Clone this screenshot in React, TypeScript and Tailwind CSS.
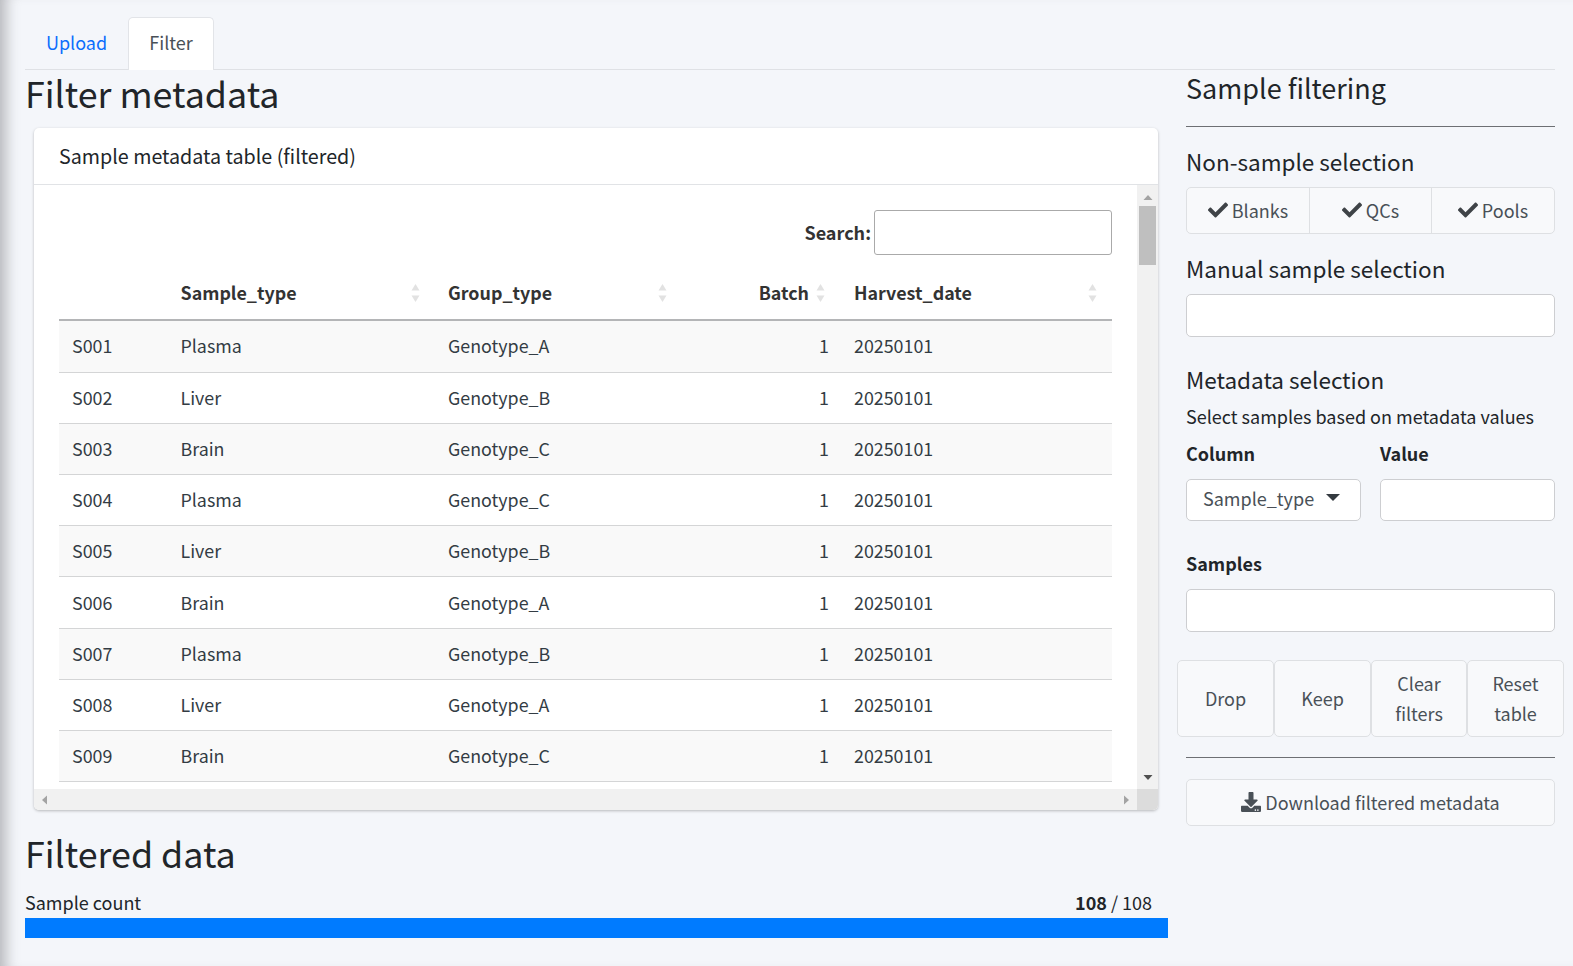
import { FaCheck, FaDownload } from "react-icons/fa";

const rows = [
  ["S001", "Plasma", "Genotype_A"],
  ["S002", "Liver", "Genotype_B"],
  ["S003", "Brain", "Genotype_C"],
  ["S004", "Plasma", "Genotype_C"],
  ["S005", "Liver", "Genotype_B"],
  ["S006", "Brain", "Genotype_A"],
  ["S007", "Plasma", "Genotype_B"],
  ["S008", "Liver", "Genotype_A"],
  ["S009", "Brain", "Genotype_C"],
];

function SortIcon() {
  return (
    <svg width="9" height="18" viewBox="0 0 9 18" className="text-[#e2e2e2]" fill="currentColor">
      <path d="M4.5 0L8.5 6.5H0.5Z" />
      <path d="M4.5 18L8.5 11.5H0.5Z" />
    </svg>
  );
}

function Arrow({ dir, color }: { dir: "up" | "down" | "left" | "right"; color: string }) {
  const d = {
    up: "M5 4L9.5 9H0.5Z",
    down: "M5 6L9.5 1H0.5Z",
    left: "M2 5L7 0.5V9.5Z",
    right: "M8 5L3 0.5V9.5Z",
  }[dir];
  return (
    <svg width="10" height="10" viewBox="0 0 10 10" fill={color}>
      <path d={d} />
    </svg>
  );
}

function TextInput({ className }: { className: string }) {
  return <div className={`bg-white border border-[#cdced1] rounded-[5px] ${className}`} />;
}

function SampleTable() {
  return (
    <table className="w-[1053px] table-fixed border-collapse text-[17.85px] text-[#333c44]">
      <colgroup>
        <col className="w-[109px]" />
        <col className="w-[267px]" />
        <col className="w-[240px]" />
        <col className="w-[166px]" />
        <col className="w-[271px]" />
      </colgroup>
      <thead>
        <tr className="h-[65px] border-b-2 border-[#b4b5b7] font-bold text-[#333]">
          <th />
          <th className="text-left pl-[12.5px] pr-[15px]">
            <div className="flex items-center justify-between pt-[11px]">
              <span>Sample_type</span>
              <SortIcon />
            </div>
          </th>
          <th className="text-left pl-[13px] pr-[8px]">
            <div className="flex items-center justify-between pt-[11px]">
              <span>Group_type</span>
              <SortIcon />
            </div>
          </th>
          <th className="pr-[16px]">
            <div className="flex items-center justify-end gap-[7px] pt-[11px]">
              <span>Batch</span>
              <SortIcon />
            </div>
          </th>
          <th className="text-left pl-[13px] pr-[15px]">
            <div className="flex items-center justify-between pt-[11px]">
              <span>Harvest_date</span>
              <SortIcon />
            </div>
          </th>
        </tr>
      </thead>
      <tbody>
        {rows.map((row, i) => {
          // first row text sits a little higher in the table
          const lift = i === 0 ? "pb-[2px]" : "";
          return (
            <tr
              key={row[0]}
              className={`border-b border-[#d4d5d6] ${i === 0 || i === 5 ? "h-[52px]" : "h-[51px]"} ${i % 2 === 0 ? "bg-[#f9f9f9]" : "bg-white"}`}
            >
              <td className={`pl-[13px] ${lift}`}>{row[0]}</td>
              <td className={`pl-[12.5px] ${lift}`}>{row[1]}</td>
              <td className={`pl-[13px] ${lift}`}>{row[2]}</td>
              <td className={`pr-[12px] text-right ${lift}`}>1</td>
              <td className={`pl-[13px] ${lift}`}>20250101</td>
            </tr>
          );
        })}
      </tbody>
    </table>
  );
}

function ToggleButton({ label, className }: { label: string; className: string }) {
  return (
    <div className={`flex items-center justify-center gap-[4px] text-[#495057] ${className}`}>
      <FaCheck className="text-[20px] text-[#3f4347] -mt-[1px]" />
      <span>{label}</span>
    </div>
  );
}

function ActionButton({ children, className }: { children: React.ReactNode; className: string }) {
  return (
    <div className={`flex items-center justify-center text-center leading-[30px] pb-[2px] bg-[#f8f9fb] border border-[#dee0e3] rounded-[5px] text-[#495057] ${className}`}>
      {children}
    </div>
  );
}

function App() {
  return (
    <div className="h-[966px] overflow-hidden bg-[#f4f6fa] pl-[25px] pr-[18px] pt-[17px] shadow-[inset_16px_0_14px_-10px_rgba(90,90,95,0.4)] font-['Noto_Sans_CJK_SC','Liberation_Sans',sans-serif] text-[18px] leading-[27px] text-[#212529]">
      {/* tabs */}
      <div className="flex h-[53px] border-b border-[#dfe1e5]">
        <div className="w-[103px] h-[52px] pb-[1px] flex items-center justify-center text-[#0d6efd]">Upload</div>
        <div className="w-[86px] h-[53px] pb-[3px] flex items-center justify-center bg-white border border-b-0 border-[#e2e4e8] rounded-t-[5px] text-[#495057]">
          Filter
        </div>
      </div>

      <div className="flex">
        {/* left column */}
        <div className="w-[1143px] shrink-0">
          <h1 className="h-[50px] text-[35.8px] leading-[44px]">Filter metadata</h1>
          <div className="mt-[8px] ml-[9px] w-[1124px] h-[682px] bg-white rounded-[5px] shadow-[0_1px_3px_rgba(0,0,0,0.25)] overflow-hidden flex flex-col">
            <div className="h-[57px] shrink-0 flex items-center pl-[25px] pb-[2px] border-b border-[#e1e3e6] text-[19.7px]">
              Sample metadata table (filtered)
            </div>
            <div className="flex-1 flex min-h-0">
              <div className="flex-1 pl-[25px] pt-[25px] min-w-0 overflow-hidden">
                <div className="w-[1053px] flex justify-end items-center gap-[3px]">
                  <span className="font-bold text-[#333]">Search:</span>
                  <div className="w-[238px] h-[45px] border border-[#aaa] rounded-[3px]" />
                </div>
                <SampleTable />
              </div>
              <div className="w-[21px] shrink-0 bg-[#f1f1f1] flex flex-col items-center">
                <div className="h-[21px] flex items-center justify-center">
                  <Arrow dir="up" color="#a3a3a3" />
                </div>
                <div className="w-[17px] h-[59px] bg-[#bfbfbf]" />
                <div className="flex-1" />
                <div className="h-[21px] flex items-center justify-center">
                  <Arrow dir="down" color="#505050" />
                </div>
              </div>
            </div>
            <div className="h-[21px] shrink-0 flex bg-[#f1f1f1]">
              <div className="flex-1 flex items-center justify-between px-[6px]">
                <Arrow dir="left" color="#a3a3a3" />
                <Arrow dir="right" color="#a3a3a3" />
              </div>
              <div className="w-[21px] bg-[#dcdcdc]" />
            </div>
          </div>

          <h1 className="h-[50px] mt-[20px] text-[35.8px] leading-[44px]">Filtered data</h1>
          <div className="mt-[11px] flex justify-between h-[27px] leading-[23px] pr-[16px]">
            <span>Sample count</span>
            <span>
              <b>108</b> / 108
            </span>
          </div>
          <div className="h-[20px] bg-[#007bff]" />
        </div>

        {/* right column */}
        <div className="w-[369px] ml-[18px] shrink-0">
          <div className="h-[56px] text-[27px] leading-[36px]">Sample filtering</div>
          <hr className="border-t border-[#6d6f73]" />
          <div className="mt-[20px] h-[40px] text-[22.5px] leading-[28px]">Non-sample selection</div>
          <div className="flex h-[47px] bg-[#f8f9fb] border border-[#dee0e3] rounded-[5px]">
            <ToggleButton label="Blanks" className="w-[123px] border-r border-[#dee0e3]" />
            <ToggleButton label="QCs" className="w-[122px] border-r border-[#dee0e3]" />
            <ToggleButton label="Pools" className="flex-1" />
          </div>
          <div className="mt-[19px] h-[41px] text-[22.5px] leading-[31px]">Manual sample selection</div>
          <TextInput className="h-[43px]" />
          <div className="mt-[28px] h-[32px] text-[22.5px] leading-[29px]">Metadata selection</div>
          <div className="mt-[4px] h-[30px] leading-[30px]">Select samples based on metadata values</div>
          <div className="mt-[9px] flex gap-[19px]">
            <div className="w-[175px]">
              <div className="h-[39px] font-bold">Column</div>
              <div className="h-[42px] pb-[3px] bg-white border border-[#cdced1] rounded-[5px] flex items-center pl-[16px] text-[#495057]">
                <span>Sample_type</span>
                <svg width="14" height="8" viewBox="0 0 14 8" className="ml-[12px] -mt-[1px]" fill="#343a40">
                  <path d="M0 0H14L7 7Z" />
                </svg>
              </div>
            </div>
            <div className="flex-1">
              <div className="h-[39px] font-bold">Value</div>
              <TextInput className="h-[42px]" />
            </div>
          </div>
          <div className="mt-[29px] h-[39px] font-bold">Samples</div>
          <TextInput className="h-[43px]" />
          <div className="mt-[28px] -mx-[9px] flex">
            <ActionButton className="w-[97px] h-[77px]">Drop</ActionButton>
            <ActionButton className="w-[97px] h-[77px]">Keep</ActionButton>
            <ActionButton className="w-[96px] h-[77px]">
              Clear
              <br />
              filters
            </ActionButton>
            <ActionButton className="w-[97px] h-[77px]">
              Reset
              <br />
              table
            </ActionButton>
          </div>
          <hr className="mt-[20px] border-t border-[#6d6f73]" />
          <ActionButton className="mt-[21px] h-[47px] gap-[4px]">
            <FaDownload className="text-[20px]" />
            <span>Download filtered metadata</span>
          </ActionButton>
        </div>
      </div>
    </div>
  );
}

export default App;
